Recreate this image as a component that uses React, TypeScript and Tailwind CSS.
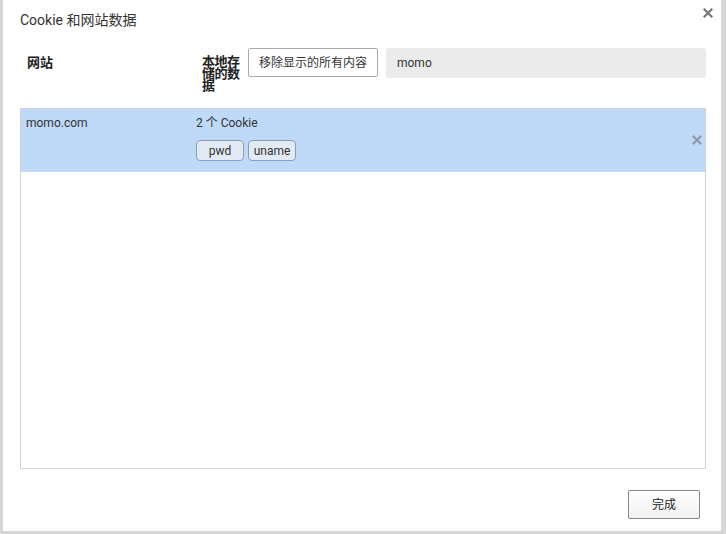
import React from "react";

const font = { fontFamily: 'Roboto, "Noto Sans", "Noto Sans CJK SC", sans-serif' };

function Cross({ className }: { className?: string }) {
  return (
    <svg viewBox="0 0 10 10" className={className} aria-hidden>
      <path d="M1.5 1.5 L8.5 8.5 M8.5 1.5 L1.5 8.5" stroke="currentColor" strokeWidth="2.2" strokeLinecap="square" />
    </svg>
  );
}

export default function App() {
  return (
    <div className="h-[534px] w-[726px] overflow-hidden bg-[#d6d6d6] pl-[3px] pr-[5px] pb-[3px]" style={font}>
      <div className="relative flex h-full flex-col bg-white">
        <button className="absolute right-[8px] top-[8px] h-[10px] w-[10px] text-[#777]">
          <Cross className="h-[10px] w-[10px]" />
        </button>
        <h1 className="pl-[17px] pt-[10px] text-[14px] leading-[20px] text-[#333]">Cookie 和网站数据</h1>

        <div className="mt-[18px] flex h-[48px] items-start pl-[24px] pr-[15px]">
          <div className="w-[175px] pt-[7px] text-[13px] font-bold leading-[16px] text-[#222]">网站</div>
          <div className="w-[40px] pt-[8px] text-[13px] font-bold leading-[12px] tracking-[-0.5px] text-[#222]">
            本地存储的数据
          </div>
          <button className="ml-[6px] h-[29px] w-[130px] rounded-[2px] border border-[#aaa] bg-white text-[12px] text-[#333]">
            移除显示的所有内容
          </button>
          <div className="ml-[8px] flex h-[30px] flex-1 items-center rounded-[3px] bg-[#ebebeb] pl-[11px] text-[12px] text-[#333]">
            momo
          </div>
        </div>

        <div className="ml-[17px] mr-[15px] mt-[12px] h-[361px] border border-[#d3d3d3]">
          <div className="relative flex h-[63px] bg-[#bfdaf8] pl-[5px] pt-[6px] text-[12px] text-[#333]">
            <div className="w-[170px] leading-[16px]">momo.com</div>
            <div>
              <div className="leading-[16px]">2 个 Cookie</div>
              <div className="mt-[9px] flex gap-[4px]">
                <span className="flex h-[21px] w-[48px] items-center justify-center rounded-[4px] border border-[#8c9db3] bg-[#e2eaf6] text-[12px]">
                  pwd
                </span>
                <span className="flex h-[21px] w-[48px] items-center justify-center rounded-[4px] border border-[#8c9db3] bg-[#e2eaf6] text-[12px]">
                  uname
                </span>
              </div>
            </div>
            <Cross className="absolute right-[3px] top-[26px] h-[10px] w-[10px] text-[#8f9aa8]" />
          </div>
        </div>

        <div className="mt-[21px] flex justify-end pr-[21px]">
          <button className="h-[29px] w-[72px] rounded-[2px] border border-[#888] bg-gradient-to-b from-white to-[#f2f2f2] text-[12px] text-[#222]">
            完成
          </button>
        </div>
      </div>
    </div>
  );
}
